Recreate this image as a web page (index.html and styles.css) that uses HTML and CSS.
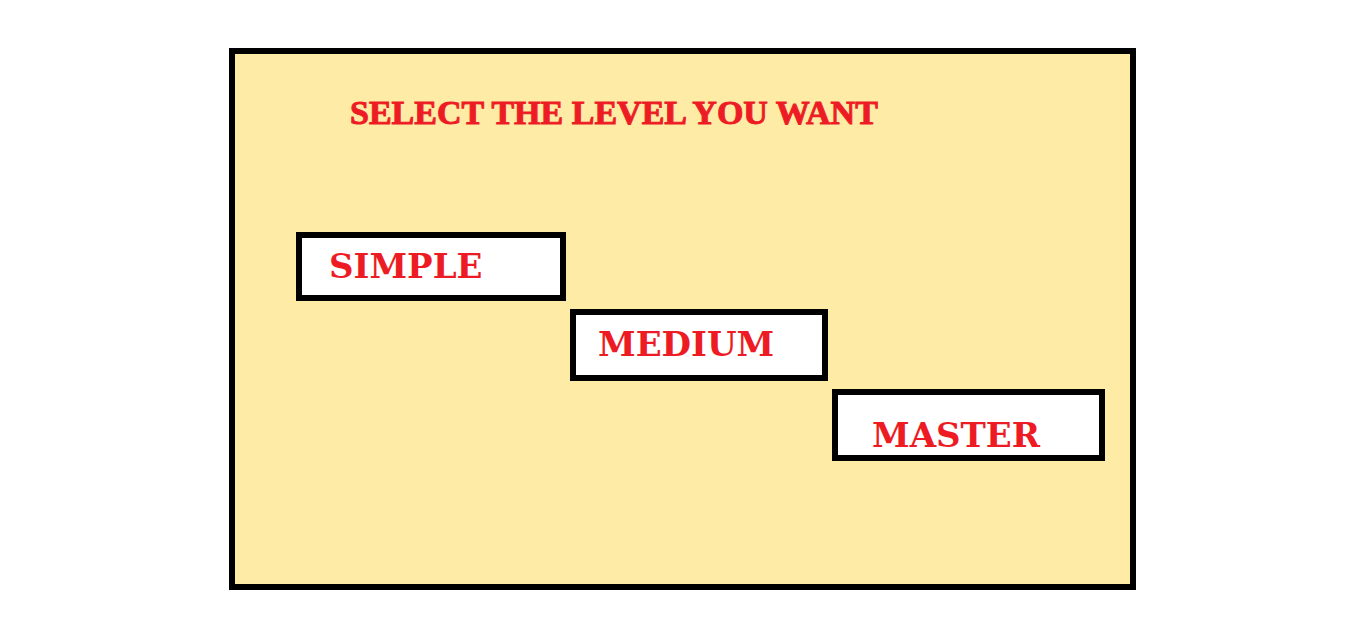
FILE: index.html
```html
<!DOCTYPE html>
<html lang="en">
<head>
<meta charset="utf-8">
<meta name="viewport" content="width=device-width, initial-scale=1">
<title>Select the level</title>
<link rel="stylesheet" href="styles.css">
</head>
<body>
<main class="board">
  <h1 class="title">SELECT THE LEVEL YOU WANT</h1>
  <div class="levels">
    <button class="level simple" type="button">SIMPLE</button>
    <button class="level medium" type="button">MEDIUM</button>
    <button class="level master" type="button">MASTER</button>
  </div>
</main>
</body>
</html>
```

FILE: styles.css
```css
* {
  box-sizing: border-box;
}

body {
  margin: 0;
  padding: 48px 214px 39px 229px;
  background: #fff;
  font-family: "DejaVu Serif", serif;
}

.board {
  padding: 40px 25px 123px 61px;
  border: 6px solid #000;
  background: #fdeba6;
}

.title {
  margin: 0 0 100px 54px;
  color: #ed1c24;
  font-family: "Liberation Serif", serif;
  font-size: 34px;
  font-weight: 900;
  line-height: 38px;
  white-space: nowrap;
  -webkit-text-stroke: 1px #ed1c24;
}

.levels {
  display: grid;
  grid-template-columns: 270fr 258fr 273fr;
  column-gap: 4px;
  row-gap: 8px;
}

.level {
  border: 6px solid #000;
  background: #fff;
  color: #ed1c24;
  font: bold 34px/40px "DejaVu Serif", serif;
  text-align: left;
  cursor: pointer;
}

.simple {
  grid-area: 1 / 1;
  padding: 8px 27px 9px;
}

.medium {
  grid-area: 2 / 2;
  padding: 9px 22px 11px;
}

.master {
  grid-area: 3 / 3;
  padding: 20px 34px 0;
}
```
